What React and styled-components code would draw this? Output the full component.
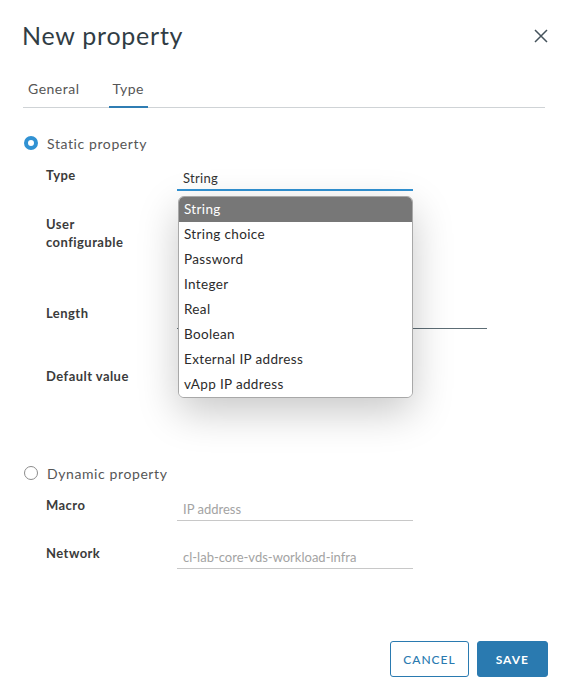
import React from "react";
import styled, { createGlobalStyle } from "styled-components";

const Global = createGlobalStyle`
  html, body {
    margin: 0;
    padding: 0;
    background: #fff;
    font-family: Lato, "Open Sans", sans-serif;
  }
`;

const Modal = styled.div`
  width: 569px;
  height: 700px;
  box-sizing: border-box;
  padding: 20px 24px 0 23px;
  display: flex;
  flex-direction: column;
  background: #fff;
`;

const Header = styled.div`
  display: flex;
  align-items: center;
  justify-content: space-between;
  height: 30px;
`;

const Title = styled.h1`
  margin: 0 0 0 -1px;
  font-size: 25px;
  font-weight: 400;
  color: #313d45;
  letter-spacing: 0.75px;
  line-height: 30px;
`;

const Close = styled.button`
  border: none;
  background: none;
  padding: 0;
  width: 14px;
  height: 14px;
  margin-right: -3px;
  margin-top: 2px;
  display: flex;
  align-items: center;
  justify-content: center;
  cursor: pointer;
`;

const Tabs = styled.div`
  display: flex;
  gap: 29px;
  margin-top: 23px;
  border-bottom: 1px solid #cfd3d6;
  padding-left: 5px;
`;

const Tab = styled.div`
  font-size: 14px;
  color: #565656;
  letter-spacing: 0.5px;
  line-height: 18px;
  padding: 7px ${(p) => (p.active ? 4 : 0)}px 8px;
  border-bottom: 2px solid ${(p) => (p.active ? "#2f7db3" : "transparent")};
  margin-bottom: -1px;
`;

const Radio = styled.label`
  display: flex;
  align-items: center;
  gap: 9px;
  margin-top: ${(p) => p.top}px;
  height: 20px;
  font-size: 14px;
  color: #565656;
  letter-spacing: 0.6px;
`;

const Dot = styled.span`
  width: 14px;
  height: 14px;
  margin-left: 1px;
  border-radius: 50%;
  box-sizing: border-box;
  border: ${(p) => (p.checked ? "4.5px solid #3192d3" : "1px solid #8c8c8c")};
  background: #fff;
`;

const Row = styled.div`
  display: grid;
  grid-template-columns: 131px 1fr;
  align-items: start;
  margin-top: ${(p) => p.top}px;
  padding-left: 23px;
  min-height: ${(p) => p.h || 0}px;
`;

const Label = styled.div`
  font-size: 13px;
  font-weight: 700;
  color: #3b3b3b;
  line-height: 18px;
  letter-spacing: 0.45px;
`;

const FieldWrap = styled.div`
  position: relative;
  width: ${(p) => p.w}px;
`;

const Field = styled.div`
  box-sizing: border-box;
  height: ${(p) => p.h || 25}px;
  padding: ${(p) => p.pt || 5}px 6px 0;
  font-size: 13px;
  line-height: 16px;
  letter-spacing: ${(p) => (p.placeholder ? 0 : 0.3)}px;
  color: ${(p) => (p.placeholder ? "#a3a3a3" : "#333")};
  border-bottom: ${(p) => p.line};
`;

const Menu = styled.ul`
  position: absolute;
  left: 1px;
  top: 30px;
  width: 235px;
  margin: 0;
  padding: 0;
  list-style: none;
  box-sizing: border-box;
  background: #fff;
  border: 1px solid #a8a8a8;
  border-radius: 6px;
  overflow: hidden;
  box-shadow: 0 14px 40px rgba(0, 0, 0, 0.22);
  z-index: 5;
`;

const Item = styled.li`
  height: 25px;
  line-height: 25px;
  padding-left: 5px;
  font-size: 13.5px;
  letter-spacing: 0.35px;
  color: ${(p) => (p.selected ? "#fff" : "#2b2b2b")};
  background: ${(p) => (p.selected ? "#777" : "#fff")};
`;

const Footer = styled.div`
  margin-top: auto;
  margin-bottom: 23px;
  display: flex;
  justify-content: flex-end;
  gap: 8px;
  margin-right: -3px;
`;

const Button = styled.button`
  height: 36px;
  padding: 0 ${(p) => p.px}px;
  border-radius: 3px;
  font-family: Lato, "Open Sans", sans-serif;
  font-size: 12px;
  letter-spacing: 1px;
  font-weight: ${(p) => (p.primary ? 700 : 500)};
  border: 1px solid #2a7ab0;
  color: ${(p) => (p.primary ? "#fff" : "#2a7ab0")};
  background: ${(p) => (p.primary ? "#2a7ab0" : "#fff")};
  cursor: pointer;
`;

const options = [
  "String",
  "String choice",
  "Password",
  "Integer",
  "Real",
  "Boolean",
  "External IP address",
  "vApp IP address",
];

export default function App() {
  return (
    <>
      <Global />
      <Modal>
        <Header>
          <Title>New property</Title>
          <Close aria-label="Close">
            <svg width="14" height="14" viewBox="0 0 14 14">
              <path d="M1 1 L13 13 M13 1 L1 13" stroke="#45535c" strokeWidth="1.5" />
            </svg>
          </Close>
        </Header>

        <Tabs>
          <Tab>General</Tab>
          <Tab active>Type</Tab>
        </Tabs>

        <Radio top={25}>
          <Dot checked />
          Static property
        </Radio>

        <Row top={13}>
          <Label>Type</Label>
          <FieldWrap w={236}>
            <Field line="2px solid #3192d3" pt={4}>String</Field>
            <Menu>
              {options.map((o, i) => (
                <Item key={o} selected={i === 0}>{o}</Item>
              ))}
            </Menu>
          </FieldWrap>
        </Row>

        <Row top={24} h={36}>
          <Label>
            User
            <br />
            configurable
          </Label>
          <div />
        </Row>

        <Row top={53}>
          <Label>Length</Label>
          <FieldWrap w={310}>
            <Field line="1px solid #5d6d75" />
          </FieldWrap>
        </Row>

        <Row top={38} h={78}>
          <Label>Default value</Label>
          <div />
        </Row>

        <Radio top={18}>
          <Dot />
          Dynamic property
        </Radio>

        <Row top={13}>
          <Label>Macro</Label>
          <FieldWrap w={236}>
            <Field placeholder line="1px solid #c8c8c8">IP address</Field>
          </FieldWrap>
        </Row>

        <Row top={23}>
          <Label>Network</Label>
          <FieldWrap w={236}>
            <Field placeholder line="1px solid #c8c8c8">cl-lab-core-vds-workload-infra</Field>
          </FieldWrap>
        </Row>

        <Footer>
          <Button px={12}>CANCEL</Button>
          <Button primary px={18}>SAVE</Button>
        </Footer>
      </Modal>
    </>
  );
}
